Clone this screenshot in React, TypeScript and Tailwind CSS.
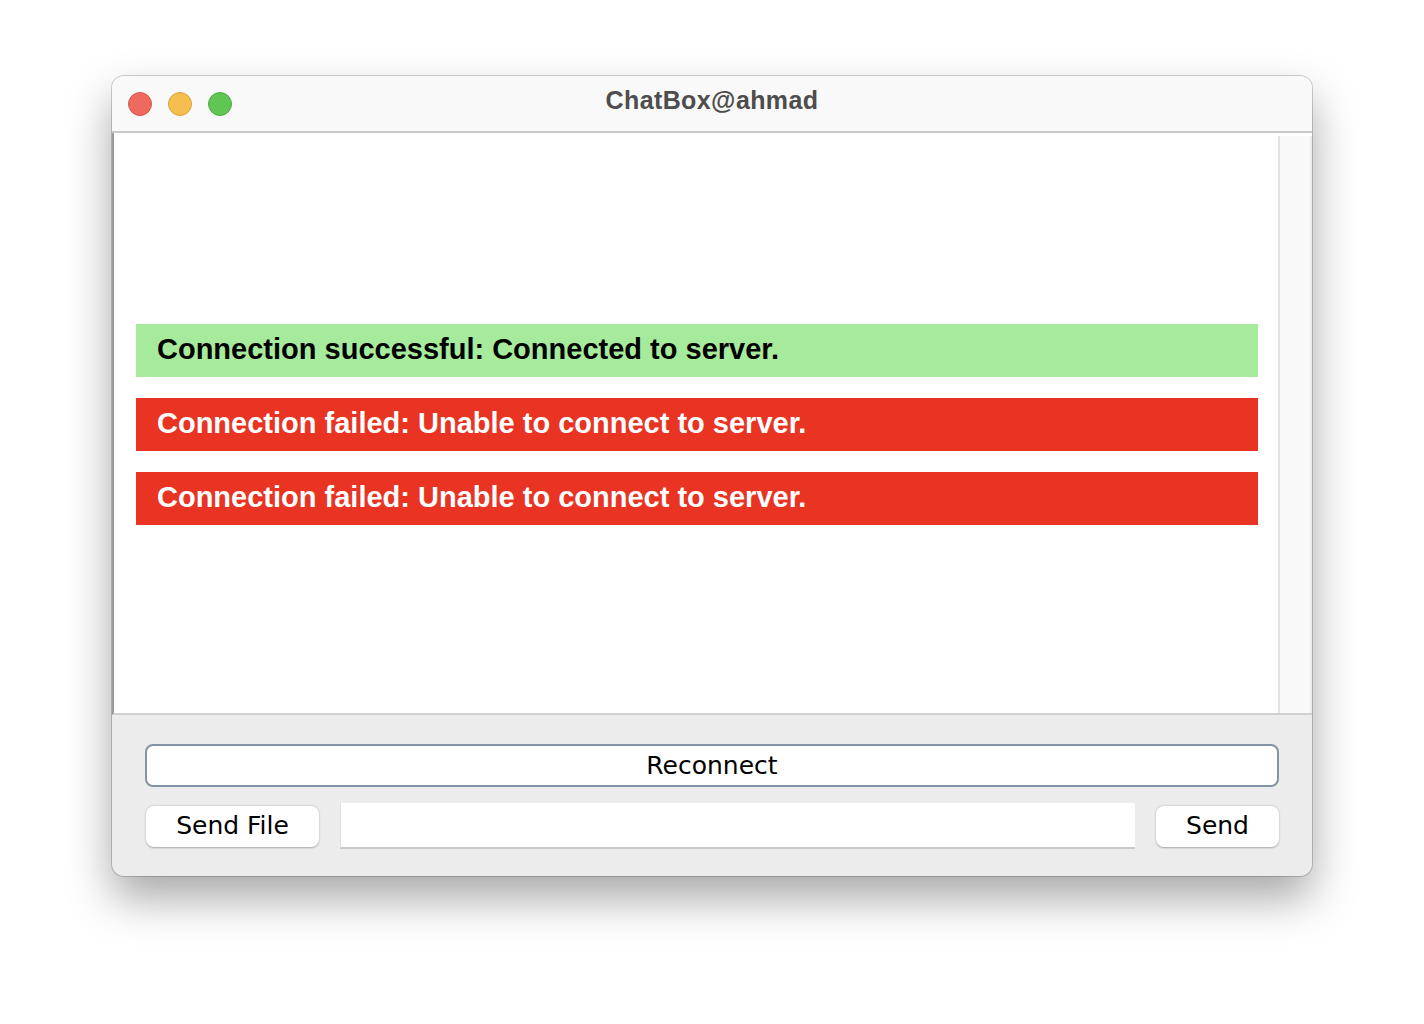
import React from "react";

function Bar({ text, ok }: { text: string; ok?: boolean }) {
  return (
    <div
      className={
        "h-[53px] flex items-center pl-[21px] font-bold text-[29px] " +
        (ok ? "bg-[#a6eb9b] text-black" : "bg-[#e93323] text-white")
      }
      style={{ fontFamily: '"Liberation Sans", Arial, sans-serif' }}
    >
      {text}
    </div>
  );
}

export default function App() {
  const ui = { fontFamily: '"DejaVu Sans", "Noto Sans", sans-serif' };
  return (
    <div className="w-[1424px] h-[1024px] bg-white flex justify-center pt-[76px]">
      <div className="w-[1200px] h-[800px] rounded-[12px] bg-[#ececec] shadow-[0_22px_45px_rgba(0,0,0,0.35),0_0_0_1px_rgba(0,0,0,0.18)] flex flex-col overflow-hidden">
        {/* title bar */}
        <div className="h-[57px] bg-[#f9f9f9] flex items-center relative shrink-0 border-b-2 border-[#c9c9c9]">
          <div className="flex gap-[16px] pl-[16px]">
            <div className="w-[24px] h-[24px] rounded-full bg-[#ee6a5f] border border-[#d7564a]" />
            <div className="w-[24px] h-[24px] rounded-full bg-[#f5bf4f] border border-[#d9a23c]" />
            <div className="w-[24px] h-[24px] rounded-full bg-[#61c554] border border-[#4eaa42]" />
          </div>
          <div
            className="absolute inset-0 flex items-center justify-center pb-[5px] text-[25px] font-bold text-[#4d4d4d] tracking-[0.4px]"
            style={{ fontFamily: '"Liberation Sans", Arial, sans-serif' }}
          >
            ChatBox@ahmad
          </div>
        </div>
        {/* content */}
        <div className="h-[582px] bg-white flex border-l-2 border-[#9a9a9a] border-b-2 border-b-[#d0d0d0] shrink-0">
          <div className="flex-1 flex flex-col justify-center gap-[21px] pl-[22px] pr-[20px] pt-[2px]">
            <Bar ok text="Connection successful: Connected to server." />
            <Bar text="Connection failed: Unable to connect to server." />
            <Bar text="Connection failed: Unable to connect to server." />
          </div>
          <div className="w-[34px] bg-[#f9f9f9] border-l-2 border-[#e2e2e2] border-r-2 border-r-[#ececec] mt-[3px]" />
        </div>
        {/* bottom */}
        <div className="flex-1 flex flex-col px-[33px] pt-[29px] gap-[16px]" style={ui}>
          <div className="h-[43px] rounded-[8px] border-2 border-[#8593a8] bg-white flex items-center justify-center text-[25px] text-black">
            Reconnect
          </div>
          <div className="flex items-center gap-[21px]">
            <div className="w-[173px] h-[41px] rounded-[8px] bg-white shadow-[0_0.5px_2px_rgba(0,0,0,0.3)] flex items-center justify-center text-[25px] text-black ml-[1px]">
              Send File
            </div>
            <div className="flex-1 h-[46px] bg-white border-b-2 border-[#c8c8c8] border-l border-l-[#e0e0e0]" />
            <div className="w-[123px] h-[41px] rounded-[8px] bg-white shadow-[0_0.5px_2px_rgba(0,0,0,0.3)] flex items-center justify-center text-[25px] text-black">
              Send
            </div>
          </div>
        </div>
      </div>
    </div>
  );
}
